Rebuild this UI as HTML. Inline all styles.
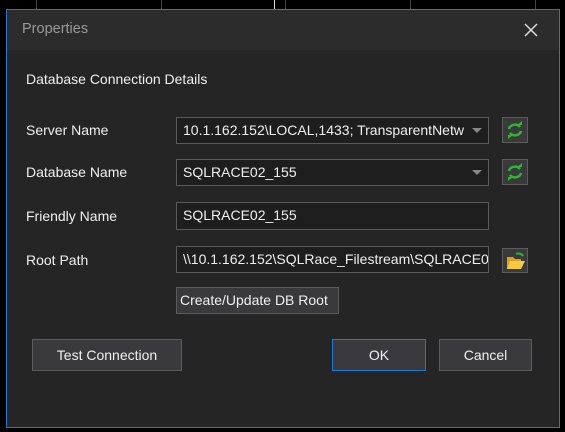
<!DOCTYPE html><html><head><style>
body{margin:0;width:565px;height:432px;background:#000;position:relative;overflow:hidden;font-family:"Liberation Sans",sans-serif;font-size:14px;color:#f0f0f0}
.vl{position:absolute;top:0;width:1px;height:9px;background:#444}
.dlg{position:absolute;left:6px;top:9px;width:552px;height:417px;border:1px solid #1c7ad4;background:#252525}
.title{position:absolute;left:0;top:0;width:552px;height:40px;background:#2c2c2c}
.a{position:absolute}
.box{position:absolute;border:1px solid #5a5a5a;background:#1e1e1e;box-sizing:border-box;padding-left:6px;line-height:24px;white-space:nowrap;overflow:hidden}
.btn{position:absolute;border:1px solid #5c5c5c;background:#3a3a3c;box-sizing:border-box;text-align:center}
.arr{position:absolute;right:6px;top:10px;width:0;height:0;border-left:5px solid transparent;border-right:5px solid transparent;border-top:5px solid #888}
</style></head><body>
<div class="vl" style="left:36px"></div><div class="vl" style="left:161px"></div><div class="vl" style="left:274px;background:#ddd"></div><div class="vl" style="left:285px"></div><div class="vl" style="left:410px"></div><div class="vl" style="left:535px"></div>
<div class="dlg">
<div class="title"></div>
<div class="a" style="left:15px;top:11px;color:#9a9a9a;font-size:14.5px">Properties</div>
<svg class="a" style="left:516px;top:12px" width="16" height="16"><path d="M2 2L14 14M14 2L2 14" stroke="#ddd" stroke-width="1.5"/></svg>
<div class="a" style="left:19px;top:61px">Database Connection Details</div>
<div class="a" style="left:19px;top:112px">Server Name</div>
<div class="a" style="left:19px;top:154px">Database Name</div>
<div class="a" style="left:19px;top:198px">Friendly Name</div>
<div class="a" style="left:19px;top:242px">Root Path</div>
<div class="box" style="left:169px;top:107px;width:313px;height:27px">10.1.162.152\LOCAL,1433; TransparentNetw<div class="arr"></div></div>
<div class="box" style="left:169px;top:149px;width:313px;height:27px">SQLRACE02_155<div class="arr"></div></div>
<div class="box" style="left:169px;top:192px;width:313px;height:28px">SQLRACE02_155</div>
<div class="box" style="left:169px;top:236px;width:313px;height:27px">\\10.1.162.152\SQLRace_Filestream\SQLRACE0</div>
<div class="btn" style="left:495px;top:107px;width:26px;height:26px"><svg width="24" height="24"><path d="M6 11a6 5 0 0 1 11-2M18 13a6 5 0 0 1-11 2" stroke="#2cb82c" stroke-width="2.5" fill="none"/><path d="M14 7l5 0 0-4zM10 17l-5 0 0 4z" fill="#2cb82c"/></svg></div>
<div class="btn" style="left:495px;top:149px;width:26px;height:26px"><svg width="24" height="24"><path d="M6 11a6 5 0 0 1 11-2M18 13a6 5 0 0 1-11 2" stroke="#2cb82c" stroke-width="2.5" fill="none"/><path d="M14 7l5 0 0-4zM10 17l-5 0 0 4z" fill="#2cb82c"/></svg></div>
<div class="btn" style="left:495px;top:238px;width:26px;height:25px"><svg width="24" height="23"><path d="M4 8h6l2 2h6v10H4z" fill="#d9a21a"/><path d="M4 20l3-8h15l-4 8z" fill="#f5c940"/><path d="M13 5a5 4 0 0 1 7 2" stroke="#2cb82c" stroke-width="2" fill="none"/></svg></div>
<div class="btn" style="left:169px;top:277px;width:163px;height:27px;line-height:25px;text-align:left;padding-left:3px;overflow:hidden;white-space:nowrap">Create/Update DB Root</div>
<div class="btn" style="left:25px;top:329px;width:150px;height:32px;line-height:30px">Test Connection</div>
<div class="btn" style="left:325px;top:329px;width:94px;height:32px;line-height:30px;border-color:#1c7ad4">OK</div>
<div class="btn" style="left:432px;top:329px;width:93px;height:32px;line-height:30px">Cancel</div>
</div>
</body></html>
